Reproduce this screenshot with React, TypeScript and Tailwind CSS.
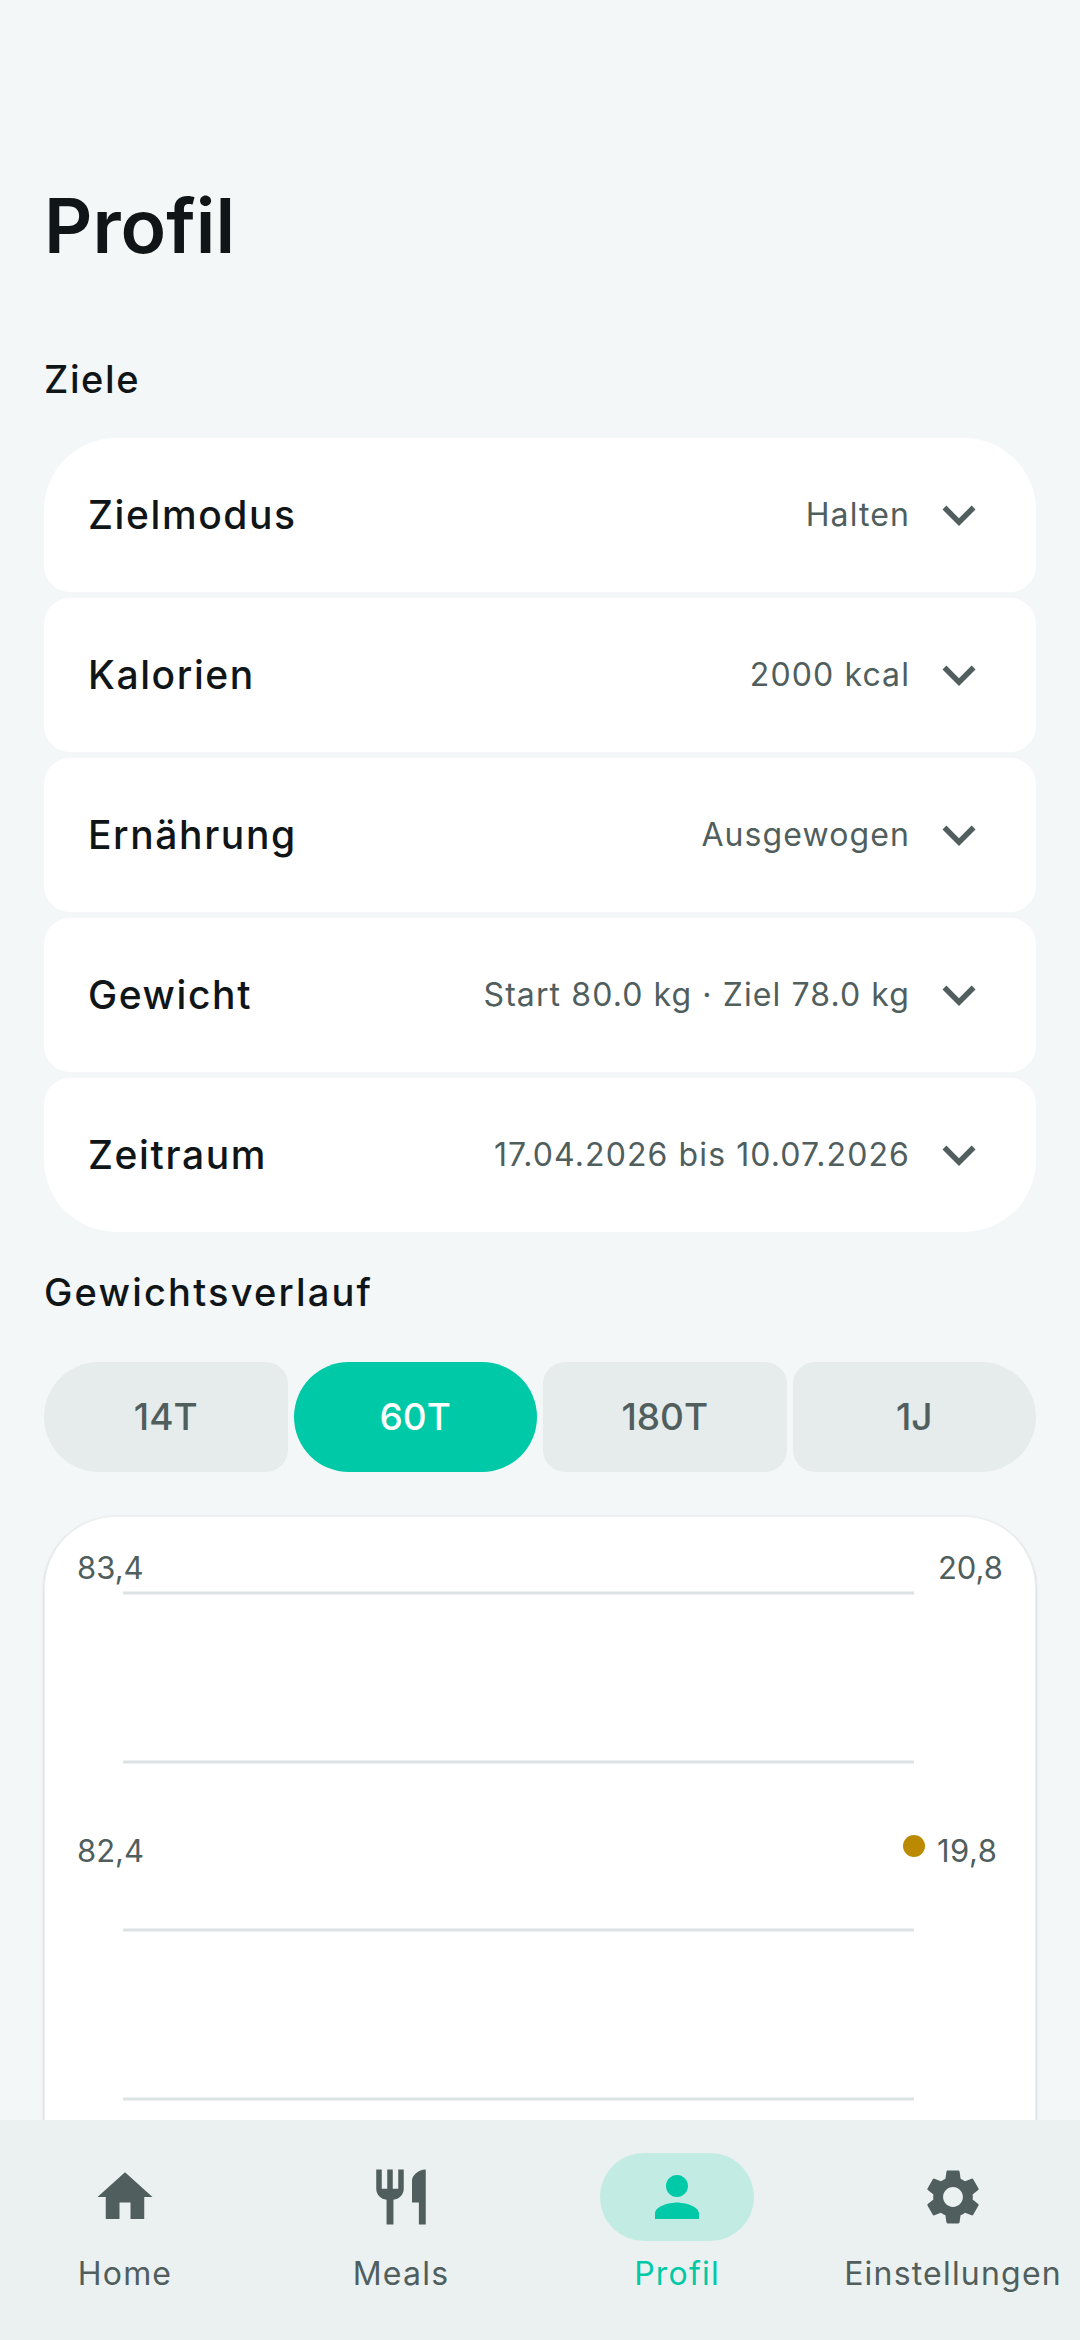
import { MdExpandMore, MdHome, MdPerson, MdRestaurant, MdSettings } from 'react-icons/md';

const font = { fontFamily: 'Inter, "Liberation Sans", sans-serif' };

const rows = [
  { label: 'Zielmodus', value: 'Halten', shape: 'rounded-t-[72px] rounded-b-[26px]' },
  { label: 'Kalorien', value: '2000 kcal', shape: 'rounded-[26px]' },
  { label: 'Ernährung', value: 'Ausgewogen', shape: 'rounded-[26px]' },
  { label: 'Gewicht', value: 'Start 80.0 kg · Ziel 78.0 kg', shape: 'rounded-[26px]' },
  { label: 'Zeitraum', value: '17.04.2026 bis 10.07.2026', shape: 'rounded-t-[26px] rounded-b-[72px]' },
];

const ranges = [
  { label: '14T', shape: 'rounded-l-[55px] rounded-r-[22px] bg-[#e6ebeb] text-[#505e5e]' },
  { label: '60T', shape: 'rounded-[55px] bg-[#00c9a7] text-white' },
  { label: '180T', shape: 'rounded-[22px] bg-[#e6ebeb] text-[#505e5e]' },
  { label: '1J', shape: 'rounded-l-[22px] rounded-r-[55px] bg-[#e6ebeb] text-[#505e5e]' },
];

const tabs = [
  { label: 'Home', Icon: MdHome },
  { label: 'Meals', Icon: MdRestaurant },
  { label: 'Profil', Icon: MdPerson, active: true },
  { label: 'Einstellungen', Icon: MdSettings },
];

export default function App() {
  return (
    <div style={font} className="flex h-[2340px] w-[1080px] flex-col overflow-hidden bg-[#f3f7f8] text-[#101517]">
      <main className="min-h-0 flex-1 overflow-hidden px-11">
        <h1 className="mt-[176px] text-[75px] leading-[100px] font-semibold tracking-[0px]">Profil</h1>
        <h2 className="mt-[77px] text-[38px] leading-[52px] font-[450] tracking-[1.6px]">Ziele</h2>

        <div className="mt-[33px] flex flex-col gap-1.5">
          {rows.map((r) => (
            <div key={r.label} className={`flex h-[154px] items-center bg-white pl-11 pr-[44px] ${r.shape}`}>
              <span className="flex-1 text-[39px] font-[450] tracking-[1.6px]">{r.label}</span>
              <span className="text-[32px] tracking-[1.1px] text-[#505e5e]">{r.value}</span>
              <MdExpandMore className="ml-4 text-[#505e5e]" size={66} />
            </div>
          ))}
        </div>

        <h2 className="mt-[34px] text-[38px] leading-[52px] font-[450] tracking-[2.2px]">Gewichtsverlauf</h2>

        <div className="mt-11 grid grid-cols-4 gap-1.5">
          {ranges.map((r) => (
            <div key={r.label} className={`flex h-[110px] items-center justify-center text-[37px] font-[450] ${r.shape}`}>{r.label}</div>
          ))}
        </div>

        <div className="relative mt-11 h-[800px] rounded-[72px] border border-[#eef1f1] bg-white shadow-[0_1px_3px_rgba(0,0,0,0.2)]">
          <svg className="absolute left-0 top-0" width="990" height="620" viewBox="0 0 990 620">
            {[76, 245, 413, 582].map((y) => (
              <rect key={y} x="78" y={y - 1.5} width="791" height="3" fill="#dbe3e3" />
            ))}
            <circle cx="869" cy="329" r="11" fill="#bc8a00" />
          </svg>
          <span className="absolute left-[32px] top-[31px] text-[31px] leading-10 text-[#505e5e]">83,4</span>
          <span className="absolute right-[32px] top-[31px] text-[31px] leading-10 text-[#505e5e]">20,8</span>
          <span className="absolute left-[32px] top-[314px] text-[31px] leading-10 text-[#505e5e]">82,4</span>
          <span className="absolute left-[892px] top-[314px] text-[31px] leading-10 tracking-[0.5px] text-[#505e5e]">19,8</span>
        </div>
      </main>

      <nav className="flex h-[220px] shrink-0 gap-14 bg-[#ebf1f1] pl-[15px] pt-[33px]">
        {tabs.map(({ label, Icon, active }) => (
          <div key={label} className="flex w-[220px] flex-col items-center">
            <div className={`flex h-[88px] w-[154px] items-center justify-center rounded-[44px] ${active ? 'bg-[#c2ebe4] text-[#00c9a7]' : 'text-[#505e5e]'}`}>
              <Icon size={66} />
            </div>
            <span className={`mt-[13px] whitespace-nowrap text-[32px] leading-10 tracking-[1.2px] ${active ? 'text-[#00c9a7]' : 'text-[#505e5e]'}`}>{label}</span>
          </div>
        ))}
      </nav>
    </div>
  );
}
